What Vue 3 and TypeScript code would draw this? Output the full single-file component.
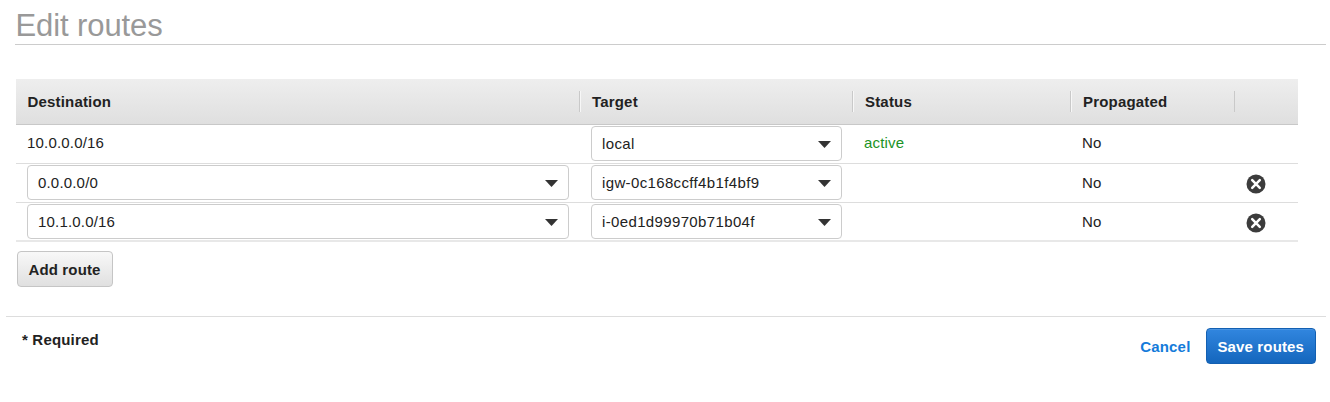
<script setup lang="ts">
import { ref } from 'vue'

interface Route {
  destination: string
  target: string
  status: string
  propagated: string
  editable: boolean
}

const columns = ['Destination', 'Target', 'Status', 'Propagated', '']

const routes = ref<Route[]>([
  { destination: '10.0.0.0/16', target: 'local', status: 'active', propagated: 'No', editable: false },
  { destination: '0.0.0.0/0', target: 'igw-0c168ccff4b1f4bf9', status: '', propagated: 'No', editable: true },
  { destination: '10.1.0.0/16', target: 'i-0ed1d99970b71b04f', status: '', propagated: 'No', editable: true },
])

function addRoute(): void {
  routes.value.push({ destination: '', target: '', status: '', propagated: 'No', editable: true })
}

function removeRoute(index: number): void {
  routes.value.splice(index, 1)
}
</script>

<template>
  <main class="page">
    <h1 class="title">Edit routes</h1>

    <section class="table">
      <div class="row head">
        <div v-for="name in columns" :key="name" class="head-cell"><span>{{ name }}</span></div>
      </div>
      <div v-for="(route, index) in routes" :key="index" class="row body-row">
        <div class="cell">
          <div v-if="route.editable" class="select">
            <span>{{ route.destination }}</span>
            <svg class="caret" viewBox="0 0 13 7"><path d="M0 0H13L6.5 7Z" /></svg>
          </div>
          <span v-else class="plain">{{ route.destination }}</span>
        </div>
        <div class="cell">
          <div class="select target">
            <span>{{ route.target }}</span>
            <svg class="caret" viewBox="0 0 13 7"><path d="M0 0H13L6.5 7Z" /></svg>
          </div>
        </div>
        <div class="cell"><span class="plain active">{{ route.status }}</span></div>
        <div class="cell"><span class="plain">{{ route.propagated }}</span></div>
        <div class="cell remove-cell">
          <button v-if="route.editable" class="remove" aria-label="Remove route" @click="removeRoute(index)">
            <svg viewBox="0 0 20 20">
              <circle cx="10" cy="10" r="9.5" />
              <path d="M6.2 6.2L13.8 13.8M13.8 6.2L6.2 13.8" />
            </svg>
          </button>
        </div>
      </div>
    </section>

    <button class="button add" @click="addRoute">Add route</button>

    <footer class="footer">
      <span class="required">* Required</span>
      <div class="actions">
        <a class="cancel">Cancel</a>
        <button class="button save">Save routes</button>
      </div>
    </footer>
  </main>
</template>

<style>
body {
  background: #fff;
}
</style>

<style scoped>
.page {
  box-sizing: border-box;
  height: 402px;
  overflow: hidden;
  font-family: "Liberation Sans", Arial, sans-serif;
  font-size: 15px;
  letter-spacing: 0.18px;
  color: #222;
}

.title {
  box-sizing: border-box;
  height: 45px;
  margin: 0 4px 34px 15px;
  padding: 8px 0 0 0.5px;
  border-bottom: 1px solid #ccc;
  font-size: 31px;
  line-height: 35px;
  font-weight: 400;
  letter-spacing: -0.1px;
  color: #999;
}

.table {
  width: 1282px;
  margin-left: 16px;
}

.row {
  display: grid;
  grid-template-columns: 563px 273px 218px 164px 64px;
}

.head {
  box-sizing: border-box;
  height: 45.5px;
  align-items: center;
  background: linear-gradient(#eee, #dfdfdf);
  border-bottom: 1px solid #c8c8c8;
  font-weight: 700;
}

.head-cell {
  height: 21px;
  line-height: 22px;
  padding-left: 12px;
  border-left: 1px solid #c9c9c9;
  box-shadow: inset 1px 0 #f7f7f7;
}

.head-cell:first-child {
  padding-left: 11.5px;
  border: 0;
  box-shadow: none;
}

.head-cell:last-child {
  box-shadow: none;
}

.body-row {
  box-sizing: border-box;
  height: 39.25px;
  border-bottom: 1px solid #ddd;
}

.body-row:last-child {
  border-bottom: 2px solid #e8e8e8;
}

.cell {
  padding: 1px 10px 0 12px;
  min-width: 0;
}

.cell:first-child {
  padding-left: 11px;
}

.plain {
  display: block;
  line-height: 36px;
}

.body-row:nth-child(2) .plain {
  line-height: 34px;
}

.active {
  color: #1b9325;
}

.select {
  box-sizing: border-box;
  display: flex;
  align-items: center;
  justify-content: space-between;
  height: 35px;
  padding: 0 10px;
  border: 1px solid #ccc;
  border-radius: 4px;
  background: #fff;
}

.target {
  letter-spacing: 0.36px;
}

.caret {
  width: 13px;
  height: 7px;
  margin-top: 2px;
  fill: #333;
}

.cell.remove-cell {
  padding: 10px 0 0 12px;
}

.remove {
  display: block;
  width: 20px;
  height: 20px;
  padding: 0;
  border: 0;
  background: none;
}

.remove svg {
  display: block;
}

.remove circle {
  fill: #3c3c3c;
}

.remove path {
  stroke: #fff;
  stroke-width: 2.5;
  stroke-linecap: round;
}

.button {
  box-sizing: border-box;
  display: block;
  height: 36px;
  padding: 1px 0 0;
  border-radius: 4px;
  font: inherit;
  font-weight: 700;
  letter-spacing: 0.15px;
  white-space: nowrap;
}

.add {
  width: 96px;
  margin: 8.75px 0 0 16.5px;
  border: 1px solid #c5c5c5;
  background: linear-gradient(#f8f8f8, #e0e0e0);
  color: #222;
}

.footer {
  display: flex;
  justify-content: space-between;
  margin: 28.75px 4px 0 6px;
  padding: 11px 10px 0 16px;
  border-top: 1px solid #ddd;
  font-weight: 700;
}

.required {
  margin-top: 3px;
}

.actions {
  display: flex;
  align-items: center;
  gap: 15px;
}

.cancel {
  padding-top: 1px;
  color: #147bda;
}

.save {
  width: 110.5px;
  border: 1px solid #1360b2;
  background: linear-gradient(#3186df, #1466bd);
  box-shadow: inset 0 1px rgba(255, 255, 255, 0.12);
  color: #fff;
}
</style>
